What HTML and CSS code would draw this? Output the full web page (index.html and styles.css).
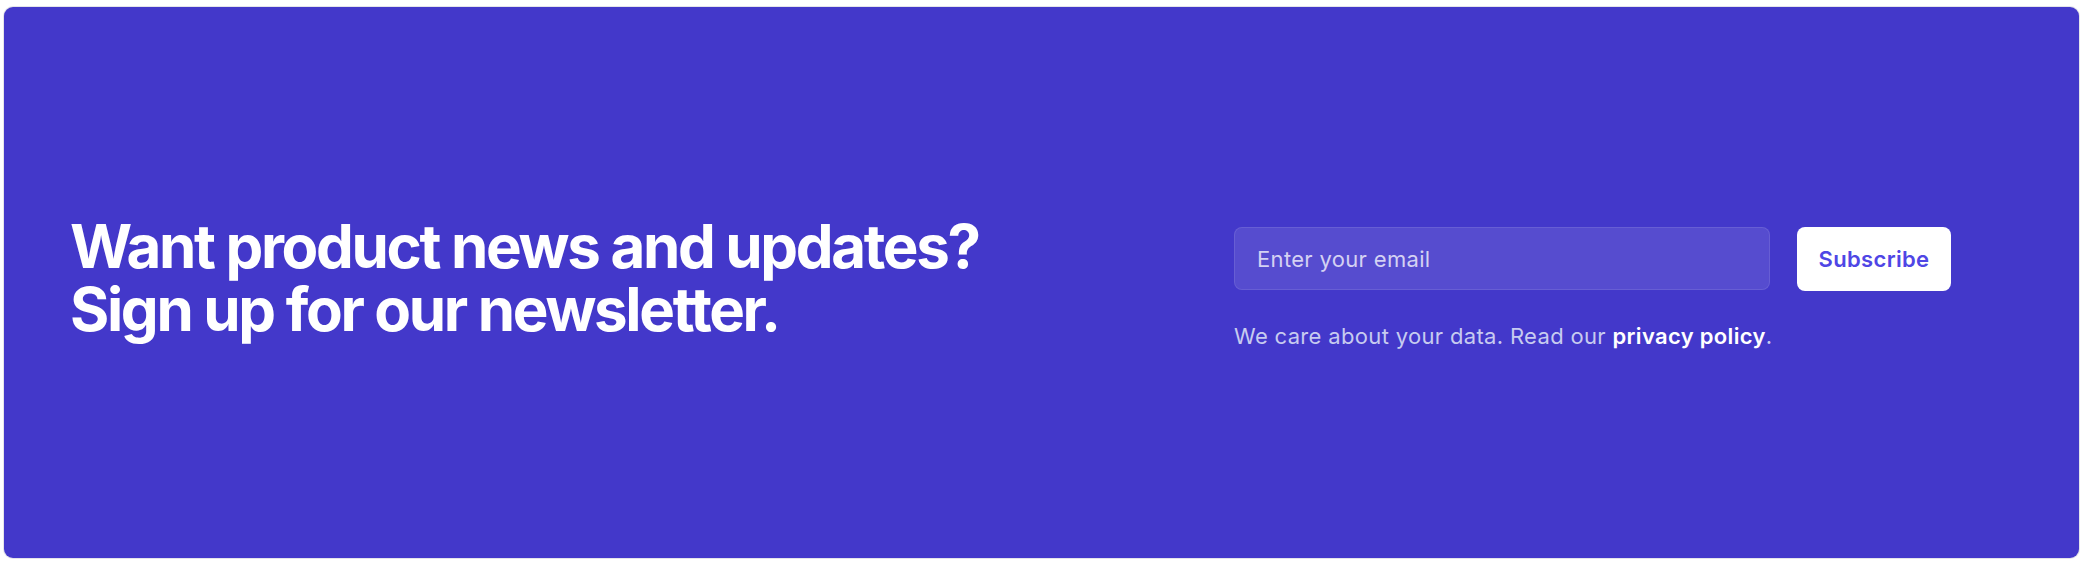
FILE: index.html
```html
<!DOCTYPE html>
<html lang="en">
<head>
<meta charset="utf-8">
<title>Newsletter</title>
<link rel="stylesheet" href="styles.css">
</head>
<body>
<div class="page">
  <section class="newsletter">
    <h2 class="headline">Want product news and updates?<br>Sign up for our newsletter.</h2>
    <div class="signup">
      <form class="signup-form">
        <input class="email" type="email" placeholder="Enter your email">
        <button class="subscribe" type="button">Subscribe</button>
      </form>
      <p class="note">We care about your data. Read our <a href="#" class="note-link">privacy policy</a>.</p>
    </div>
  </section>
</div>
</body>
</html>
```

FILE: styles.css
```css
* { box-sizing: border-box; }
html, body { margin: 0; padding: 0; background: #ffffff; }
body { font-family: Inter, "Noto Sans", sans-serif; }

.page {
  height: 565px;
  padding: 7px 5px 7px 4px;
}

.newsletter {
  height: 100%;
  background: #4338ca;
  border-radius: 9px;
  box-shadow: 0 0 0 1px #e4e4ea;
  display: grid;
  grid-template-columns: 1fr 717px;
  align-items: center;
  padding: 0 128px 0 66px;
}

.headline {
  margin: 0;
  color: #ffffff;
  font-size: 60px;
  line-height: 63px;
  font-weight: 700;
  letter-spacing: -0.039em;
  position: relative;
  top: -5px;
}

.signup {
  display: flex;
  flex-direction: column;
  position: relative;
  top: 7px;
}

.signup-form {
  display: flex;
  gap: 27px;
  margin: 0;
}

.email {
  flex: 1 1 auto;
  min-width: 0;
  height: 63px;
  border-radius: 8px;
  border: 1px solid rgba(255,255,255,0.1);
  background: rgba(255,255,255,0.1);
  color: #fff;
  font-family: inherit;
  font-size: 22px;
  letter-spacing: 0.015em;
  padding: 0 22px;
  outline: none;
}
.email::placeholder { color: rgba(255,255,255,0.75); }

.subscribe {
  flex: none;
  width: 154px;
  height: 64px;
  border: none;
  border-radius: 8px;
  background: #ffffff;
  color: #4f46e5;
  font-family: inherit;
  font-size: 22px;
  letter-spacing: 0.015em;
  font-weight: 600;
  cursor: pointer;
}

.note {
  margin: 29px 0 0;
  font-size: 22px;
  letter-spacing: 0.015em;
  line-height: 32px;
  color: #c7cbf0;
}
.note-link {
  color: #ffffff;
  font-weight: 600;
  text-decoration: none;
}
```
